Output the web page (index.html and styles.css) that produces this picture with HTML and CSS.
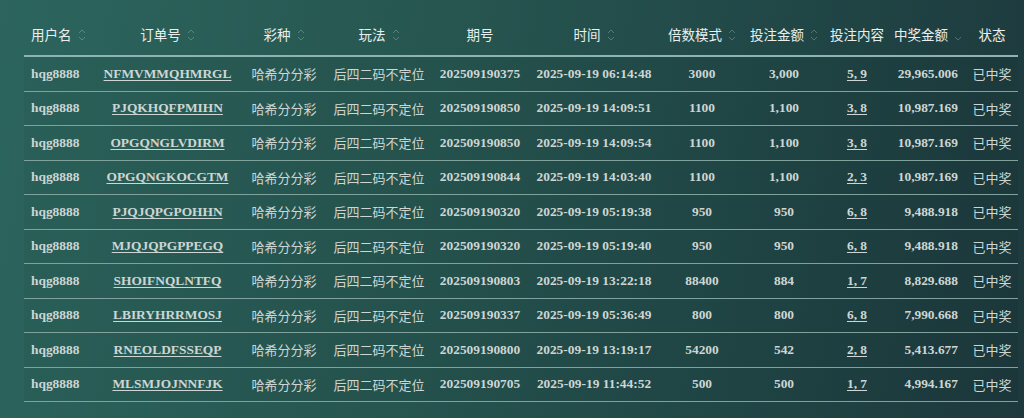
FILE: index.html
```html
<!DOCTYPE html>
<html lang="zh">
<head>
<meta charset="utf-8">
<title>中奖记录</title>
<link rel="stylesheet" href="styles.css">
</head>
<body>
<div class="page">
<table class="records">
<colgroup>
<col class="c-user"><col class="c-order"><col class="c-lot"><col class="c-play"><col class="c-issue"><col class="c-time"><col class="c-mult"><col class="c-bet"><col class="c-content"><col class="c-win"><col class="c-status">
</colgroup>
<thead>
<tr>
<th class="left">用户名<svg class="sort" viewBox="0 0 8 14"><path d="M1 5L4 2L7 5M1 9L4 12L7 9"/></svg></th>
<th>订单号<svg class="sort" viewBox="0 0 8 14"><path d="M1 5L4 2L7 5M1 9L4 12L7 9"/></svg></th>
<th>彩种<svg class="sort" viewBox="0 0 8 14"><path d="M1 5L4 2L7 5M1 9L4 12L7 9"/></svg></th>
<th>玩法<svg class="sort" viewBox="0 0 8 14"><path d="M1 5L4 2L7 5M1 9L4 12L7 9"/></svg></th>
<th>期号</th>
<th>时间<svg class="sort" viewBox="0 0 8 14"><path d="M1 5L4 2L7 5M1 9L4 12L7 9"/></svg></th>
<th>倍数模式<svg class="sort" viewBox="0 0 8 14"><path d="M1 5L4 2L7 5M1 9L4 12L7 9"/></svg></th>
<th>投注金额<svg class="sort" viewBox="0 0 8 14"><path d="M1 5L4 2L7 5M1 9L4 12L7 9"/></svg></th>
<th>投注内容</th>
<th class="right">中奖金额<svg class="sort" viewBox="0 0 8 14"><path d="M1 9L4 12L7 9"/></svg></th>
<th>状态</th>
</tr>
</thead>
<tbody>
<tr><td class="left num">hqg8888</td><td class="num"><a>NFMVMMQHMRGL</a></td><td class="cn">哈希分分彩</td><td class="cn">后四二码不定位</td><td class="num">202509190375</td><td class="num">2025-09-19 06:14:48</td><td class="num">3000</td><td class="num">3,000</td><td class="num"><a>5, 9</a></td><td class="num right">29,965.006</td><td class="cn">已中奖</td></tr>
<tr><td class="left num">hqg8888</td><td class="num"><a>PJQKHQFPMIHN</a></td><td class="cn">哈希分分彩</td><td class="cn">后四二码不定位</td><td class="num">202509190850</td><td class="num">2025-09-19 14:09:51</td><td class="num">1100</td><td class="num">1,100</td><td class="num"><a>3, 8</a></td><td class="num right">10,987.169</td><td class="cn">已中奖</td></tr>
<tr><td class="left num">hqg8888</td><td class="num"><a>OPGQNGLVDIRM</a></td><td class="cn">哈希分分彩</td><td class="cn">后四二码不定位</td><td class="num">202509190850</td><td class="num">2025-09-19 14:09:54</td><td class="num">1100</td><td class="num">1,100</td><td class="num"><a>3, 8</a></td><td class="num right">10,987.169</td><td class="cn">已中奖</td></tr>
<tr><td class="left num">hqg8888</td><td class="num"><a>OPGQNGKOCGTM</a></td><td class="cn">哈希分分彩</td><td class="cn">后四二码不定位</td><td class="num">202509190844</td><td class="num">2025-09-19 14:03:40</td><td class="num">1100</td><td class="num">1,100</td><td class="num"><a>2, 3</a></td><td class="num right">10,987.169</td><td class="cn">已中奖</td></tr>
<tr><td class="left num">hqg8888</td><td class="num"><a>PJQJQPGPOHHN</a></td><td class="cn">哈希分分彩</td><td class="cn">后四二码不定位</td><td class="num">202509190320</td><td class="num">2025-09-19 05:19:38</td><td class="num">950</td><td class="num">950</td><td class="num"><a>6, 8</a></td><td class="num right">9,488.918</td><td class="cn">已中奖</td></tr>
<tr><td class="left num">hqg8888</td><td class="num"><a>MJQJQPGPPEGQ</a></td><td class="cn">哈希分分彩</td><td class="cn">后四二码不定位</td><td class="num">202509190320</td><td class="num">2025-09-19 05:19:40</td><td class="num">950</td><td class="num">950</td><td class="num"><a>6, 8</a></td><td class="num right">9,488.918</td><td class="cn">已中奖</td></tr>
<tr><td class="left num">hqg8888</td><td class="num"><a>SHOIFNQLNTFQ</a></td><td class="cn">哈希分分彩</td><td class="cn">后四二码不定位</td><td class="num">202509190803</td><td class="num">2025-09-19 13:22:18</td><td class="num">88400</td><td class="num">884</td><td class="num"><a>1, 7</a></td><td class="num right">8,829.688</td><td class="cn">已中奖</td></tr>
<tr><td class="left num">hqg8888</td><td class="num"><a>LBIRYHRRMOSJ</a></td><td class="cn">哈希分分彩</td><td class="cn">后四二码不定位</td><td class="num">202509190337</td><td class="num">2025-09-19 05:36:49</td><td class="num">800</td><td class="num">800</td><td class="num"><a>6, 8</a></td><td class="num right">7,990.668</td><td class="cn">已中奖</td></tr>
<tr><td class="left num">hqg8888</td><td class="num"><a>RNEOLDFSSEQP</a></td><td class="cn">哈希分分彩</td><td class="cn">后四二码不定位</td><td class="num">202509190800</td><td class="num">2025-09-19 13:19:17</td><td class="num">54200</td><td class="num">542</td><td class="num"><a>2, 8</a></td><td class="num right">5,413.677</td><td class="cn">已中奖</td></tr>
<tr><td class="left num">hqg8888</td><td class="num"><a>MLSMJOJNNFJK</a></td><td class="cn">哈希分分彩</td><td class="cn">后四二码不定位</td><td class="num">202509190705</td><td class="num">2025-09-19 11:44:52</td><td class="num">500</td><td class="num">500</td><td class="num"><a>1, 7</a></td><td class="num right">4,994.167</td><td class="cn">已中奖</td></tr>
</tbody>
</table>
</div>
</body>
</html>
```

FILE: styles.css
```css
html, body {
  margin: 0;
  padding: 0;
}
body {
  width: 1024px;
  height: 418px;
  overflow: hidden;
  background: linear-gradient(100deg, #2c655e 0%, #275650 40%, #224a49 65%, #1d393d 100%);
  font-family: "Noto Sans CJK SC", "Noto Sans", sans-serif;
}
.page {
  padding: 12px 6px 0 24px;
}
.records {
  width: 994px;
  table-layout: fixed;
  border-collapse: collapse;
  border-spacing: 0;
}
.c-user { width: 71px; }
.c-order { width: 145px; }
.c-lot { width: 88px; }
.c-play { width: 102px; }
.c-issue { width: 100px; }
.c-time { width: 128px; }
.c-mult { width: 88px; }
.c-bet { width: 76px; }
.c-content { width: 70px; }
.c-win { width: 74px; }
.c-status { width: 52px; }

.records th {
  height: 43px;
  padding: 0;
  font-weight: normal;
  font-size: 13.5px;
  color: #e8efee;
  text-align: center;
  white-space: nowrap;
  border-bottom: 2px solid #8fb3ae;
}
.records td {
  height: 33.5px;
  padding: 0;
  text-align: center;
  white-space: nowrap;
  color: #cdd6d4;
  border-bottom: 1px solid #7fa29d;
  background: rgba(0, 0, 0, 0.035);
}
.records .left {
  text-align: left;
  padding-left: 7px;
}
.records .right {
  text-align: right;
  padding-right: 8px;
}
.records th.right {
  padding-right: 4px;
}
.num {
  font-family: "Liberation Serif", "Times New Roman", serif;
  font-weight: bold;
  font-size: 13.4px;
}
.cn {
  font-size: 13px;
  color: #c8d1cf;
}
.records a {
  color: #cdd6d4;
  text-decoration: underline;
  text-underline-offset: 2px;
}
.sort {
  width: 8px;
  height: 14px;
  margin-left: 6px;
  vertical-align: -2px;
}
.sort path {
  fill: none;
  stroke: rgba(220, 235, 232, 0.28);
  stroke-width: 1;
}
```
